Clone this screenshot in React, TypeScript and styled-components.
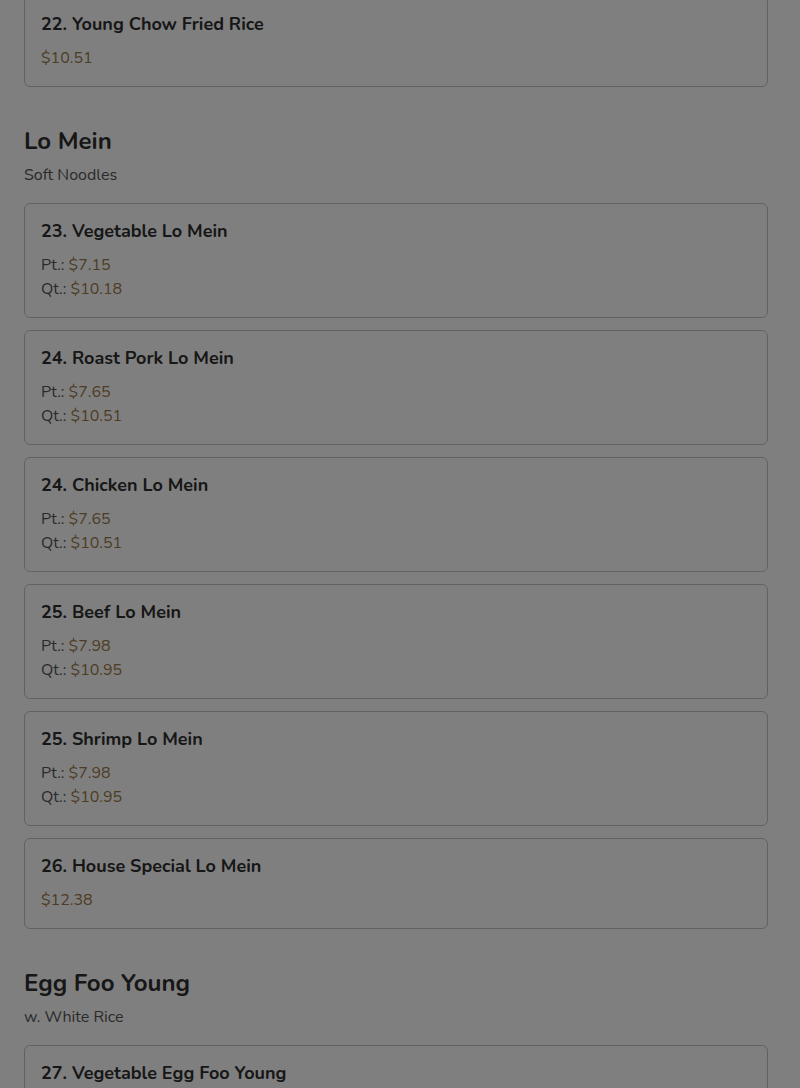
import React from "react";
import styled, { createGlobalStyle } from "styled-components";

const Global = createGlobalStyle`
  html, body { margin: 0; padding: 0; background: #ffffff; }
  body { font-family: "Nunito", "Lato", "Noto Sans", sans-serif; color: #333333; overflow: hidden; }
`;

const Page = styled.div`
  padding: 0 32px 0 24px;
  height: 1088px;
  overflow: hidden;
`;

const Menu = styled.div`
  margin-top: -4px;
  display: flex;
  flex-direction: column;
`;

const Section = styled.section<{ $first?: boolean }>`
  display: flex;
  flex-direction: column;
  margin-top: ${(p) => (p.$first ? "0" : "36px")};
`;

const SectionTitle = styled.h2`
  margin: 0;
  font-size: 24px;
  line-height: 36px;
  font-weight: 700;
  color: #2e2e2e;
`;

const SectionNote = styled.p`
  margin: 4px 0 16px;
  font-size: 16px;
  line-height: 24px;
  color: #555555;
`;

const Items = styled.div`
  display: flex;
  flex-direction: column;
  gap: 12px;
`;

const Card = styled.div`
  border: 1px solid #c4c4c4;
  border-radius: 6px;
  background: #ffffff;
  padding: 16px;
  display: flex;
  flex-direction: column;
`;

const ItemName = styled.h3`
  margin: 0 0 10px;
  font-size: 18px;
  line-height: 23px;
  font-weight: 700;
  color: #2e2e2e;
`;

const PriceRow = styled.div`
  font-size: 16px;
  line-height: 24px;
  color: #555555;
`;

const Price = styled.span`
  color: #9c7a48;
`;

const Overlay = styled.div`
  position: fixed;
  inset: 0;
  background: rgba(0, 0, 0, 0.5);
  pointer-events: none;
`;

type Item = { name: string; prices: { label?: string; value: string }[] };
type Sec = { title?: string; note?: string; items: Item[] };

const data: Sec[] = [
  {
    items: [{ name: "22. Young Chow Fried Rice", prices: [{ value: "$10.51" }] }],
  },
  {
    title: "Lo Mein",
    note: "Soft Noodles",
    items: [
      { name: "23. Vegetable Lo Mein", prices: [{ label: "Pt.:", value: "$7.15" }, { label: "Qt.:", value: "$10.18" }] },
      { name: "24. Roast Pork Lo Mein", prices: [{ label: "Pt.:", value: "$7.65" }, { label: "Qt.:", value: "$10.51" }] },
      { name: "24. Chicken Lo Mein", prices: [{ label: "Pt.:", value: "$7.65" }, { label: "Qt.:", value: "$10.51" }] },
      { name: "25. Beef Lo Mein", prices: [{ label: "Pt.:", value: "$7.98" }, { label: "Qt.:", value: "$10.95" }] },
      { name: "25. Shrimp Lo Mein", prices: [{ label: "Pt.:", value: "$7.98" }, { label: "Qt.:", value: "$10.95" }] },
      { name: "26. House Special Lo Mein", prices: [{ value: "$12.38" }] },
    ],
  },
  {
    title: "Egg Foo Young",
    note: "w. White Rice",
    items: [
      { name: "27. Vegetable Egg Foo Young", prices: [{ label: "Pt.:", value: "$7.98" }, { label: "Qt.:", value: "$10.95" }] },
    ],
  },
];

export default function App() {
  return (
    <>
      <Global />
      <Page>
        <Menu>
          {data.map((s, i) => (
            <Section key={i} $first={i === 0}>
              {s.title && <SectionTitle>{s.title}</SectionTitle>}
              {s.note && <SectionNote>{s.note}</SectionNote>}
              <Items>
                {s.items.map((it, j) => (
                  <Card key={j}>
                    <ItemName>{it.name}</ItemName>
                    {it.prices.map((p, k) => (
                      <PriceRow key={k}>
                        {p.label && <>{p.label} </>}
                        <Price>{p.value}</Price>
                      </PriceRow>
                    ))}
                  </Card>
                ))}
              </Items>
            </Section>
          ))}
        </Menu>
      </Page>
      <Overlay />
    </>
  );
}
